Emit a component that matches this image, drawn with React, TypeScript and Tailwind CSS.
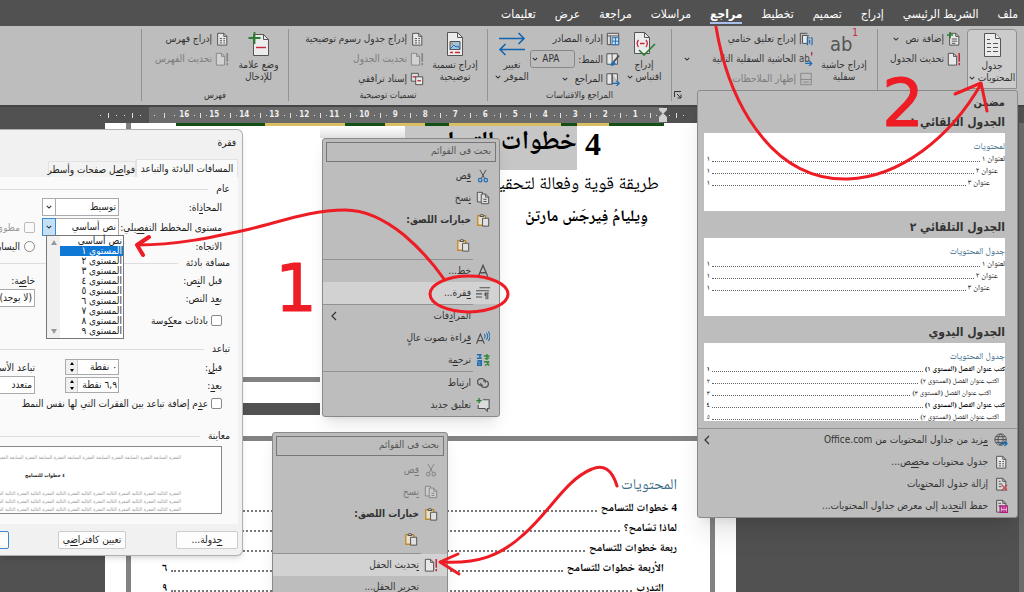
import React from "react";

type IconName =
  | "doc" | "docBang" | "docPlus" | "docX" | "docSave" | "endnote" | "nextNote" | "notes"
  | "sources" | "style" | "biblio" | "crossRef" | "globe" | "cut" | "copy" | "paste"
  | "font" | "paragraph" | "readAloud" | "translate" | "link" | "comment" | "none";

const page = "M3 1.5h7l3.5 3.5v10H3z";

const icons: Record<IconName, React.ReactNode> = {
  doc: (
    <>
      <path d={page} fill="#e8e8e8" />
      <path d="M10 1.5V5h3.5M5.5 7.5h2.5M9.5 7.5h2M5.5 10h2.5M9.5 10h2M5.5 12.5h2.5M9.5 12.5h2" />
    </>
  ),
  docBang: (
    <>
      <path d="M1.5 1.5h6l3.5 3.5v10h-9.5z" fill="#e8e8e8" />
      <path d="M7.5 1.5V5h3.5" />
      <path d="M14 1v10M14 12.5v2.5" stroke="#c8283c" strokeWidth="1.8" />
    </>
  ),
  docPlus: (
    <>
      <path d={page} fill="#e8e8e8" />
      <path d="M10 1.5V5h3.5M5.5 8h6M5.5 10.5h6M5.5 13h4" />
      <path d="M3.5 0v7M0 3.5h7" stroke="#2c7d32" strokeWidth="1.8" />
    </>
  ),
  docX: (
    <>
      <path d={page} fill="#d8d8d8" />
      <path d="M10 1.5V5h3.5M5.5 5h2M5.5 8h4M5.5 11h3" />
      <path d="M9 9l6 6.5M15 9l-6 6.5" stroke="#c84848" strokeWidth="1.5" />
    </>
  ),
  docSave: (
    <>
      <path d={page} fill="#d8d8d8" />
      <path d="M10 1.5V5h3.5M5 5h3M5 8h3" />
      <path d="M7 8h8.5v7.5H7z" fill="#e0b8d4" stroke="#b0207c" strokeWidth="1.6" />
      <path d="M9.5 8v2.5h3.5V8M9.5 15.5v-2h3.5v2" stroke="#b0207c" strokeWidth="1.3" />
    </>
  ),
  endnote: (
    <>
      <path d="M1.5 14V1.5h8M4 12V4h7" />
      <path d="M4 4h6v9H4z" fill="#e8e8e8" />
      <path d="M9.5 6.5v8M15 6.5v8M9 6.5h1.5M9 14.5h1.5M14 6.5h1M14 14.5h1M12.2 9v4.5M12.2 6v1.5" stroke="#1f6db5" strokeWidth="1.3" />
    </>
  ),
  nextNote: (
    <>
      <text x="0" y="11" fontSize="11" direction="ltr" fill="#444" stroke="none">ab</text>
      <path d="M14.5 0v4" stroke="#c8283c" strokeWidth="1.5" />
      <path d="M7 13h7M11.5 10l3 3-3 3" stroke="#1f6db5" strokeWidth="1.5" />
    </>
  ),
  notes: <path d="M2 1.5h12v13H2zM2 8.5h12M4.5 11.5h7" />,
  sources: (
    <>
      <path d="M1.5 1.5h13v13h-13zM1.5 4.5h13M5 4.5v10" fill="#e0e0e0" />
      <path d="M7 6.5h7.5v8H7zM7 10.5h7.5M10.8 6.5v8" fill="#cfe0ee" stroke="#1f6db5" />
    </>
  ),
  style: (
    <>
      <path d="M1 2h6v12H1zM7 2h6v12H7" fill="#e8e8e8" />
      <path d="M15 4l-6 7" strokeWidth="2" />
      <path d="M8.5 10.5c-2 .5-1.500 3-3 4.500 3 .5 5-.5 5-2.500z" fill="#1f6db5" stroke="#1f6db5" />
    </>
  ),
  biblio: (
    <>
      <path d="M1 2h6v12H1zM7 2h6v8M7 2v12" fill="#e8e8e8" />
      <path d="M7 13h8M12 10l3 3-3 3" stroke="#1f6db5" strokeWidth="1.5" />
    </>
  ),
  crossRef: (
    <>
      <path d="M1.5 1.5h8v9h-8z" fill="#e0e0e0" />
      <path d="M3 5.5h4" stroke="#c8283c" strokeWidth="1.5" />
      <path d="M6.5 5.5h8v9h-8z" fill="#e8e8e8" />
      <path d="M8.5 10h4" stroke="#c8283c" strokeWidth="1.5" />
    </>
  ),
  globe: (
    <>
      <circle cx="7.5" cy="7.5" r="6.5" />
      <path d="M1 7.5h13M2 4.2h11M2 10.8h11M7.5 1c-4 3.5-4 9.5 0 13M7.5 1c4 3.5 4 9.5 0 13" />
      <path d="M7 12h8M12 9l3 3-3 3" stroke="#1f6db5" strokeWidth="1.6" />
    </>
  ),
  cut: (
    <>
      <path d="M4.5 1l5.5 10M11.5 1L6 11" />
      <circle cx="4.8" cy="12.8" r="2" stroke="#1f6db5" strokeWidth="1.4" />
      <circle cx="11.2" cy="12.8" r="2" stroke="#1f6db5" strokeWidth="1.4" />
    </>
  ),
  copy: (
    <>
      <path d="M1.5 1.5h6v11h-6z" fill="#dcdcdc" />
      <path d="M6 3.5h5l3.5 3.5v7.5H6z" fill="#dcdcdc" />
      <path d="M11 3.5V7h3.5M8.5 9.5h3.5M8.5 12h3.5" />
    </>
  ),
  paste: (
    <>
      <path d="M2 3h9v11H2z" fill="#e8e0cc" stroke="#c08a28" strokeWidth="1.5" />
      <path d="M4.5 4V2.5h1.2a1 1 0 0 1 2 0h1.3V4z" fill="#ccc" />
      <path d="M7.5 6h7v9h-7z" fill="#e0e0e0" />
    </>
  ),
  font: <path d="M2.5 14.5L8 1.5l5.5 13M4.5 10h7" strokeWidth="1.5" />,
  paragraph: (
    <>
      <path d="M4 2h12M0 5.5h15M0 9h7M0 12.5h7" strokeWidth="1.2" />
      <path d="M10.5 8h4M11.5 8v7M13.5 8v7M11.5 11a1.5 1.5 0 0 1 0-3" strokeWidth="1.2" />
    </>
  ),
  readAloud: (
    <>
      <path d="M.5 14.5L5 3.5l4.5 11M2 11h6" strokeWidth="1.3" />
      <path d="M9.5 3.5c1.2 1.5 1.2 3.5 0 5M11.8 2c2 2.5 2 5.5 0 8M14 .5c2.5 3.5 2.5 7.5 0 11" stroke="#1f6db5" strokeWidth="1.2" />
    </>
  ),
  translate: (
    <>
      <path d="M1 2h5.5M4.5 2v4M1 6h5.5M1.5 9h4.5v5h-4v-2.5H6" stroke="#1f6db5" strokeWidth="1.8" />
      <path d="M9 3.5h6.5M12.5 1v7M10 6.5l5-1M9 10h6M12 9.5l3 5M15 10l-4.5 4.5" stroke="#2c8a3c" strokeWidth="1.6" />
    </>
  ),
  link: (
    <>
      <path d="M8 10.5H5a3.8 3.8 0 0 1 0-7.5h2a3.8 3.8 0 0 1 3.5 5" strokeWidth="1.3" />
      <path d="M8 5.5h3a3.8 3.8 0 0 1 0 7.5H9a3.8 3.8 0 0 1-3.5-5" strokeWidth="1.3" />
    </>
  ),
  comment: (
    <>
      <path d="M8 2h7v10h-2v3l-3-3H2.5V8" fill="#dcdcdc" strokeWidth="1.2" />
      <path d="M3.5 0v6M.5 3h6" stroke="#2c7d32" strokeWidth="1.5" />
    </>
  ),
  none: null,
};

const Icon = ({ name, muted }: { name: IconName; muted?: boolean }) => (
  <svg
    viewBox="0 0 16 16"
    className={`h-[14px] w-[14px] shrink-0 ${muted ? "opacity-50 grayscale" : ""}`}
    fill="none"
    stroke="#505050"
    strokeWidth="1.1"
  >
    {icons[name]}
  </svg>
);

const Chevron = ({ className = "" }: { className?: string }) => (
  <svg viewBox="0 0 8 8" className={`h-[6px] w-[6px] shrink-0 ${className}`} fill="none" stroke="#333" strokeWidth="1.4">
    <path d="M1 2.5l3 3 3-3" />
  </svg>
);

const SubmenuArrow = () => (
  <svg viewBox="0 0 6 10" className="mr-auto h-[10px] w-[6px] shrink-0" fill="none" stroke="#333" strokeWidth="1.2">
    <path d="M5 1L1 5l4 4" />
  </svg>
);

// "_" marks the access key: the letter after it is underlined
const Label = ({ text }: { text: string }) => {
  const i = text.indexOf("_");
  if (i < 0) return <>{text}</>;
  return (
    <>
      {text.slice(0, i)}
      <u className="underline-offset-2">{text[i + 1]}</u>
      {text.slice(i + 2)}
    </>
  );
};

/* ---------- Ribbon ---------- */

const tabs = ["ملف", "الشريط الرئيسي", "إدراج", "تصميم", "تخطيط", "مراجع", "مراسلات", "مراجعة", "عرض", "تعليمات"];

const TabBar = () => (
  <nav className="flex h-[26px] items-center gap-[19px] bg-[#515151] px-[6px] pt-[3px] text-[12px] text-white">
    {tabs.map((tab) => (
      <button
        key={tab}
        className={`h-[18px] border-b-2 leading-4 whitespace-nowrap ${tab === "مراجع" ? "border-[#a9c0ee] font-bold" : "border-transparent"}`}
      >
        {tab}
      </button>
    ))}
  </nav>
);

const Group = ({ label, width, launcher, children }: { label: string; width: string; launcher?: boolean; children: React.ReactNode }) => (
  <section className={`${width} flex shrink-0 flex-col border-l border-[#929292]`}>
    <div className="flex h-[60px] items-start">{children}</div>
    <div className="flex h-3 items-center justify-center text-[9px] leading-3">
      <span className="flex-1 text-center">{label}</span>
      {launcher && (
        <svg viewBox="0 0 8 8" className="ml-[2px] h-2 w-2" fill="none" stroke="#333">
          <path d="M.5 6V.5H7M3 3l4 4M7 3.5V7H3.5" />
        </svg>
      )}
    </div>
  </section>
);

const BigButton = ({ icon, lines, drop, className = "" }: { icon: React.ReactNode; lines: string[]; drop?: boolean; className?: string }) => (
  <button className={`flex shrink-0 flex-col items-center whitespace-nowrap pt-[3px] text-[10px] leading-3 ${className}`}>
    <span className="mb-[3px] flex h-6 items-center">{icon}</span>
    <span>{lines[0]}</span>
    <span className="flex items-center gap-[3px]">
      {lines[1]}
      {drop && <Chevron />}
    </span>
  </button>
);

const Command = ({ icon, text, drop, muted }: { icon: IconName; text: string; drop?: boolean; muted?: boolean }) => (
  <button className={`flex h-5 items-center gap-[3px] whitespace-nowrap text-[10px] leading-5 ${muted ? "text-[#7c7c7c]" : ""}`}>
    <Icon name={icon} muted={muted} />
    {text}
    {drop && <Chevron className="mr-1" />}
  </button>
);

const big = "h-6 w-7";

const Ribbon = () => (
  <div className="flex h-[79px] bg-[#bdbdbd] pt-[3px] pb-1 text-[#333]">
    <Group label="" width="w-[147px]">
      <BigButton
        className="mr-[7px] w-[50px] rounded-t border border-[#8f8f8f] bg-[#cbcbcb] pb-1"
        lines={["جدول", "المحتويات"]}
        drop
        icon={
          <svg viewBox="0 0 28 24" className={big} fill="#ececec" stroke="#555">
            <path d="M6.5.5h11l5 5v18h-16z" />
            <path d="M17.5.5v5h5M9 6.5h3M9 10.5h4M9 14.5h4M9 18.5h4M15 10.5h5M15 14.5h5M15 18.5h5" />
          </svg>
        }
      />
      <div className="mr-[6px] flex flex-col">
        <Command icon="docPlus" text="إضافة نص" drop />
        <Command icon="docBang" text="تحديث الجدول" />
      </div>
    </Group>

    <Group label="" width="w-[206px]" launcher>
      <BigButton
        className="mr-2 w-[50px]"
        lines={["إدراج حاشية", "سفلية"]}
        icon={
          <span dir="ltr" className="flex items-start text-[20px] leading-6 text-[#555]">
            ab<sup className="text-[10px] leading-3 text-[#c8283c]">1</sup>
          </span>
        }
      />
      <div className="mr-[6px] flex flex-1 flex-col">
        <Command icon="endnote" text="إدراج تعليق ختامي" />
        <div className="flex items-center justify-between">
          <Command icon="nextNote" text="الحاشية السفلية التالية" />
          <Chevron className="ml-3" />
        </div>
        <Command icon="notes" text="إظهار الملاحظات" muted />
      </div>
    </Group>

    <Group label="المراجع والاقتباسات" width="w-[184px]">
      <BigButton
        className="mr-[9px] w-9"
        lines={["إدراج", "اقتباس"]}
        drop
        icon={
          <svg viewBox="0 0 28 24" className={big} fill="none" stroke="#555">
            <path d="M4.5.5h10l5 5v16h-15z" fill="#ececec" />
            <path d="M14.5.5v5h5" />
            <path d="M8.5 8c-1.5 2-1.5 5 0 7M16 8c1.5 2 1.5 5 0 7M10 11.5h4.5" stroke="#c8283c" strokeWidth="1.3" />
            <path d="M9 18l5 5L25 12" stroke="#2c7d32" strokeWidth="1.6" />
          </svg>
        }
      />
      <div className="mr-[6px] flex w-[89px] flex-col">
        <Command icon="sources" text="إدارة المصادر" />
        <div className="flex h-5 items-center gap-[3px] text-[10px]">
          <Icon name="style" />
          <label htmlFor="cite-style">النمط:</label>
          <div dir="ltr" className="relative mr-auto">
            <select id="cite-style" className="h-[18px] w-[45px] appearance-none rounded-[3px] border border-[#888] pl-[11px] text-[10px] leading-4">
              <option>APA</option>
            </select>
            <Chevron className="pointer-events-none absolute left-[2px] top-[6px]" />
          </div>
        </div>
        <Command icon="biblio" text="المراجع" drop />
      </div>
      <BigButton
        className="mr-[3px] w-8"
        lines={["تغيير", "الموفر"]}
        drop
        icon={
          <svg viewBox="0 0 28 24" className={big} fill="none" stroke="#1266b0" strokeWidth="1.6">
            <path d="M1 6.5h25M20.5 1l5.5 5.5-5.5 5.5M27 17.5H2M7.5 12L2 17.5 7.5 23" />
          </svg>
        }
      />
    </Group>

    <Group label="تسميات توضيحية" width="w-[199px]">
      <BigButton
        className="mr-[7px] w-[50px]"
        lines={["إدراج تسمية", "توضيحية"]}
        icon={
          <svg viewBox="0 0 28 24" className={big} fill="none" stroke="#555">
            <path d="M6.5.5h10l5 5v18h-15z" fill="#ececec" />
            <path d="M16.5.5v5h5" />
            <path d="M9 9.5h10v8H9z" fill="#9fc3e0" />
            <path d="M9 17l4-4 2 2 2-1 2 3" stroke="#1f6db5" />
            <path d="M10 11.5h2" stroke="#e0902c" strokeWidth="2" />
            <path d="M9 20.5h3M14 20.5h5" stroke="#c8283c" strokeWidth="1.4" />
          </svg>
        }
      />
      <div className="mr-[6px] flex flex-col">
        <Command icon="doc" text="إدراج جدول رسوم توضيحية" />
        <Command icon="docBang" text="تحديث الجدول" muted />
        <Command icon="crossRef" text="إسناد ترافقي" />
      </div>
    </Group>

    <Group label="فهرس" width="w-[147px]">
      <BigButton
        className="mr-2 w-[43px]"
        lines={["وضع علامة", "للإدخال"]}
        icon={
          <svg viewBox="0 0 28 24" className={big} fill="none" stroke="#555">
            <path d="M8.5 2.5h10l5 5v16h-15z" fill="#ececec" />
            <path d="M18.5 2.5v5h5" />
            <path d="M11 15.5h10" stroke="#c8283c" strokeWidth="1.4" />
            <path d="M9.5 0v12M3.5 6h12" stroke="#2c7d32" strokeWidth="1.8" />
          </svg>
        }
      />
      <div className="mr-2 flex flex-col">
        <Command icon="doc" text="إدراج فهرس" />
        <Command icon="docBang" text="تحديث الفهرس" muted />
      </div>
    </Group>
  </div>
);

const Ticks = () => (
  <>
    <i className="h-px w-px bg-[#ddd]" />
    <i className="h-[5px] w-px bg-[#ddd]" />
    <i className="h-px w-px bg-[#ddd]" />
  </>
);

const Ruler = () => (
  <div className="flex h-[18px] border-t-2 border-[#454545] bg-[#515151] text-[8px] font-bold text-[#eee]">
    <div className="flex w-[361px] items-center justify-end gap-[6px] pl-[6px]">
      <Ticks />
    </div>
    <div className="flex h-4 w-[514px] items-center bg-[#6b6b6b]">
      <svg viewBox="0 0 8 14" className="-mr-1 h-[14px] w-2 shrink-0" fill="#d0d0d0">
        <path d="M0 0h8v2L4 6 0 2zM4 5l4 4v5H0V9z" />
      </svg>
      {Array.from({ length: 16 }, (_, n) => (
        <div key={n} className="flex w-[30px] shrink-0 items-center justify-around">
          <Ticks />
          <span className="w-2 text-center leading-4">{n + 1}</span>
        </div>
      ))}
      <div className="flex flex-1 items-center justify-around">
        <Ticks />
      </div>
    </div>
    <div className="flex items-center gap-[7px] pr-2">
      <Ticks />
      <Ticks />
    </div>
  </div>
);

/* ---------- Document ---------- */

const toc = [
  { text: "4 خطوات للتسامح", pageNo: "٤", indent: false },
  { text: "لماذا تسّامح؟", pageNo: "٥", indent: false },
  { text: "ربعة خطوات للتسامح", pageNo: "٦", indent: false },
  { text: "الأربعة خطوات للتسامح", pageNo: "٦", indent: true },
  { text: "التدرب", pageNo: "٩", indent: true },
];

const Workspace = () => (
  <main className="flex flex-1 overflow-hidden bg-[#515151]">
    <div className="w-[5px] bg-[#6b6b6b]" />
    <div className="w-[283px]" />
    <div className="flex w-[631px] flex-col gap-3">
      <article className="h-[280px] shrink-0 bg-white px-[21px] pb-[21px]">
        <div className="h-full border-x-[5px] border-b-[5px] border-[#828282]">
          <div className="mr-[46px] ml-[45px] flex h-[3px] bg-[#154f18]">
            <div className="mr-[55px] w-8 bg-[#dcbe62]" />
            <div className="mr-4 w-28 bg-[#dcbe62]" />
            <div className="mr-6 w-10 bg-[#dcbe62]" />
            <div className="mr-10 w-[80px] bg-[#dcbe62]" />
          </div>
        </div>
      </article>
      <article className="h-[280px] shrink-0 bg-white px-[21px] pt-[21px]">
        <div className="h-full border-x-[5px] border-t-[5px] border-[#828282] pt-[31px] pr-[33px] pl-[31px] font-['Liberation_Serif','Noto_Naskh_Arabic','DejaVu_Sans',serif] text-black">
          <h2 className="h-[25px] text-[15px] leading-[25px] text-[#3b6a85]">المحتويات</h2>
          <ul>
            {toc.map((row) => (
              <li key={row.text} className={`flex h-[20px] items-center gap-1 text-[11px] leading-[20px] font-bold ${row.indent ? "pr-[13px]" : ""}`}>
                <a href="#toc">{row.text}</a>
                <span className="mt-2 flex-1 border-b-2 border-dotted border-[#777]" />
                <span>{row.pageNo}</span>
              </li>
            ))}
          </ul>
        </div>
      </article>
    </div>
  </main>
);

/* ---------- Context menus ---------- */

type Entry = { icon?: IconName; text?: string; muted?: boolean; heading?: boolean; active?: boolean; sub?: boolean; rule?: boolean; big?: boolean };

const textMenu: Entry[] = [
  { icon: "cut", text: "_قص" },
  { icon: "copy", text: "_نسخ" },
  { icon: "paste", text: "خيارات اللصق:", heading: true },
  { big: true },
  { rule: true },
  { icon: "font", text: "خ_ط..." },
  { icon: "paragraph", text: "_فقرة...", active: true },
  { rule: true },
  { icon: "none", text: "المرا_دفات", sub: true },
  { icon: "readAloud", text: "_قراءة بصوت عالٍ" },
  { icon: "translate", text: "ترج_مة" },
  { rule: true },
  { icon: "link", text: "ار_تباط" },
  { icon: "comment", text: "تعليق جديد" },
];

const fieldMenu: Entry[] = [
  { icon: "cut", text: "_قص", muted: true },
  { icon: "copy", text: "_نسخ", muted: true },
  { icon: "paste", text: "خيارات اللصق:", heading: true },
  { big: true },
  { rule: true },
  { icon: "docBang", text: "_تحديث الحقل", active: true },
  { icon: "none", text: "_تحرير الحقل..." },
];

const ContextMenu = ({ entries, className }: { entries: Entry[]; className: string }) => (
  <div className={`absolute rounded-[3px] border border-[#8a8a8a] bg-[#bdbdbd] text-[10px] text-[#333] shadow-lg ${className}`}>
    <div className="p-[3px]">
      <input
        aria-label="بحث في القوائم"
        placeholder="بحث في القوائم"
        className="block h-5 w-full border border-[#777] px-1 pb-1 text-[10px] leading-4 placeholder:text-[#555]"
      />
    </div>
    {entries.map((e, i) => {
      if (e.rule) return <hr key={i} className="mr-[26px] border-[#929292]" />;
      if (e.big)
        return (
          <div key={i} className="flex h-7 items-center pr-[29px]">
            <button aria-label="لصق">
              <Icon name="paste" />
            </button>
          </div>
        );
      return (
        <button
          key={i}
          className={`flex h-[22px] w-full items-center gap-[5px] pr-[9px] pl-2 leading-[22px] ${e.active ? "bg-[#d2d2d2]" : ""} ${e.muted ? "text-[#777]" : ""} ${e.heading ? "font-bold" : ""}`}
        >
          <Icon name={e.icon!} muted={e.muted} />
          <span>
            <Label text={e.text!} />
          </span>
          {e.sub && <SubmenuArrow />}
        </button>
      );
    })}
  </div>
);

const TextSnippet = () => (
  <div className="absolute top-[126px] left-[320px] h-[309px] w-[377px] bg-white font-['Liberation_Serif','Noto_Naskh_Arabic','DejaVu_Sans',serif] text-black">
    <h1 className="flex h-11 pr-[96px] text-[32px] leading-9 font-bold">
      4
      <span className="mr-2 h-11 w-[172px] shrink-0 bg-[#c6c6c6] text-[26px] whitespace-nowrap leading-[30px]">خطوات للتسامح</span>
      <span className="h-3 flex-1 bg-linear-to-t from-[#e0e0e0] to-white" />
    </h1>
    <p className="h-7 pr-[38px] text-[18px] leading-[26px]">طريقة قوية وفعالة لتحقيق</p>
    <p className="mt-1 h-7 pr-[49px] text-[16px] leading-7 font-bold">وِيليامُ فِيرجَسْ مارتنْ</p>
  </div>
);

/* ---------- Table of contents gallery ---------- */

const autoRows = [
  { text: "لعنوان ١", n: "١", style: "text-[8px]" },
  { text: "عنوان ٢", n: "١", style: "text-[8px] pr-[7px]" },
  { text: "عنوان ٣", n: "١", style: "text-[8px] pr-[15px]" },
];

const manualRows = [
  { text: "كتب عنوان الفصل (المستوى ١)", n: "١", style: "text-[7px] font-bold" },
  { text: "اكتب عنوان الفصل (المستوى ٢)", n: "٢", style: "text-[7px] pr-[6px]" },
  { text: "اكتب عنوان الفصل (المستوى ٣)", n: "٣", style: "text-[7px] pr-[14px]" },
  { text: "كتب عنوان الفصل (المستوى ١)", n: "٤", style: "text-[7px] font-bold" },
  { text: "اكتب عنوان الفصل (المستوى ٢)", n: "٥", style: "text-[7px] pr-[6px]" },
];

const galleries = [
  { name: "الجدول التلقائي ١", title: "لمحتويات", rows: autoRows },
  { name: "الجدول التلقائي ٢", title: "جدول المحتويات", rows: autoRows },
  { name: "الجدول اليدوي", title: "جدول المحتويات", rows: manualRows },
];

const galleryActions: { icon: IconName; text: string; sub?: boolean }[] = [
  { icon: "globe", text: "_مزيد من جداول المحتويات من Office.com", sub: true },
  { icon: "doc", text: "جدول محتويات مخ_صص..." },
  { icon: "docX", text: "إزالة جدول المحت_ويات" },
  { icon: "docSave", text: "حفظ الت_حديد إلى معرض جداول المحتويات..." },
];

const TocGallery = () => (
  <div className="absolute top-[90px] left-[697px] w-[321px] rounded-[3px] border border-[#8a8a8a] bg-[#bdbdbd] text-[#333] shadow-xl">
    <p className="h-5 pr-3 text-[11px] leading-6 font-bold">مضمن</p>
    {galleries.map((g) => (
      <section key={g.name} className="pr-3 pl-[6px]">
        <h3 className="h-[22px] text-[12px] leading-[22px] font-bold">{g.name}</h3>
        <button className="mb-[5px] flex h-[78px] w-full flex-col justify-start overflow-hidden bg-white pt-[6px] text-right font-['Liberation_Serif','Noto_Naskh_Arabic','DejaVu_Sans',serif]">
          <span className="h-[14px] shrink-0 text-[9px] leading-[14px] text-[#2f6182]">{g.title}</span>
          {g.rows.map((r, i) => (
            <span key={i} className={`flex h-3 w-full shrink-0 items-center gap-[2px] leading-3 text-black ${r.style}`}>
              {r.text}
              <span className="mt-1 flex-1 border-b border-dotted border-[#666]" />
              <span className="w-[6px] pl-1">{r.n}</span>
            </span>
          ))}
        </button>
      </section>
    ))}
    <hr className="mt-[7px] border-[#929292]" />
    {galleryActions.map((a) => (
      <button key={a.icon} className="flex h-[22px] w-full items-center gap-[6px] pr-[9px] pl-[6px] text-[10px] leading-[22px]">
        <Icon name={a.icon} />
        <span>
          <Label text={a.text} />
        </span>
        {a.sub && <SubmenuArrow />}
      </button>
    ))}
  </div>
);

/* ---------- Paragraph dialog ---------- */

const levels = ["نص أساسي", "المستوى ١", "المستوى ٢", "المستوى ٣", "المستوى ٤", "المستوى ٥", "المستوى ٦", "المستوى ٧", "المستوى ٨", "المستوى ٩"];

const Legend = ({ text }: { text: string }) => (
  <div className="flex h-4 items-center gap-2 pr-2 leading-4">
    {text}
    <span className="flex-1 border-t border-[#ddd]" />
  </div>
);

const DialogSelect = ({ id, value, open }: { id: string; value: string; open?: boolean }) => (
  <div className="relative w-[77px]">
    <select id={id} className="block h-[18px] w-full appearance-none border border-[#aaa] bg-white pr-[2px] text-[10px] leading-4">
      <option>{value}</option>
    </select>
    <span className={`pointer-events-none absolute top-0 left-0 flex h-[18px] w-[14px] items-center justify-center border ${open ? "border-[#3b8ad0] bg-[#c4e0f7]" : "border-[#aaa]"}`}>
      <Chevron />
    </span>
  </div>
);

const Spinner = ({ id, value }: { id: string; value: string }) => (
  <div className="flex h-4 w-[54px] border border-[#aaa] bg-white">
    <input id={id} defaultValue={value} className="w-0 flex-1 px-px text-[10px] leading-3" />
    <div className="flex w-3 flex-col border-r border-[#ccc] bg-[#f0f0f0]">
      <button aria-label="زيادة" className="flex flex-1 items-center justify-center">
        <svg viewBox="0 0 4 3" className="h-[3px] w-1"><path d="M0 3l2-3 2 3z" /></svg>
      </button>
      <button aria-label="إنقاص" className="flex flex-1 items-center justify-center">
        <svg viewBox="0 0 4 3" className="h-[3px] w-1"><path d="M0 0l2 3 2-3z" /></svg>
      </button>
    </div>
  </div>
);

// each row: label column, field column, then whatever is cut by the window edge
const Row = ({ id, label, height, field, side }: { id?: string; label: string; height: string; field?: React.ReactNode; side?: React.ReactNode }) => (
  <div className={`flex items-center pr-4 ${height}`}>
    <label htmlFor={id} className="w-[103px] shrink-0 whitespace-nowrap">
      <Label text={label} />
    </label>
    <div className="w-[84px] shrink-0">{field}</div>
    <div className="flex w-24 shrink-0 items-center gap-1 whitespace-nowrap">{side}</div>
  </div>
);

const box = "h-[11px] w-[11px] shrink-0 appearance-none border border-[#888] bg-white";

const ParagraphDialog = () => (
  <div role="dialog" aria-label="فقرة" className="absolute top-[129px] left-0 w-[243px] overflow-hidden rounded-tr-md rounded-br-md border border-l-0 border-[#b0b0b0] bg-[#f1f1f1] pr-1 text-[10px] text-[#222] shadow-md">
    <h2 className="h-[29px] pr-[2px] leading-[26px]">فقرة</h2>
    <div className="flex h-[18px] items-end leading-4">
      <button className="h-[18px] w-[102px] shrink-0 border border-b-0 border-[#e2e2e2] bg-[#fafafa] whitespace-nowrap">المسافات البادئة والتباعد</button>
      <button className="h-4 w-[88px] shrink-0 border border-b-0 border-[#e2e2e2] bg-[#f3f3f3] whitespace-nowrap"><Label text="فوا_صل صفحات وأسطر" /></button>
    </div>
    <div className="h-[347px] bg-[#fafafa] pt-1">
      <Legend text="عام" />
      <Row id="align" label="المحا_ذاة:" height="h-5" field={<DialogSelect id="align" value="توسيط" />} />
      <Row
        id="level"
        label="مستوى المخطط التف_صيلي:"
        height="h-5"
        field={<DialogSelect id="level" value="نص أساسي" open />}
        side={
          <label className="flex items-center gap-1 text-[#999]">
            <input type="checkbox" disabled className="h-[11px] w-[11px] shrink-0 appearance-none rounded-[2px] border border-[#bbb]" />
            مطوي افتراضيًا
          </label>
        }
      />
      <Row
        label="الاتجاه:"
        height="h-[18px]"
        side={
          <label className="flex items-center gap-1">
            <input type="radio" name="dir" className={`${box} rounded-full`} />
            اليسار إلى اليمين
          </label>
        }
      />
      <Legend text="مسافة بادئة" />
      <Row label="قبل ال_نص:" height="h-[18px]" side={<label htmlFor="special"><Label text="خا_صة:" /></label>} />
      <Row label="ب_عد النص:" height="h-[18px]" side={<DialogSelect id="special" value="(لا يوجد)" />} />
      <label className="flex h-[26px] items-center gap-[3px] pr-4">
        <input type="checkbox" className={`${box} rounded-[2px]`} />
        <span><Label text="بادئات مع_كوسة" /></span>
      </label>
      <div className="h-2" />
      <Legend text="تباعد" />
      <div className="h-px" />
      <Row id="before" label="قب_ل:" height="h-[18px]" field={<Spinner id="before" value="٠ نقطة" />} side={<label htmlFor="spacing">تباعد الأسطر:</label>} />
      <Row id="after" label="بع_د:" height="h-[18px]" field={<Spinner id="after" value="٦,٩ نقطة" />} side={<DialogSelect id="spacing" value="متعدد" />} />
      <label className="flex h-[18px] items-center gap-[3px] pr-4 whitespace-nowrap">
        <input type="checkbox" className={`${box} rounded-[2px]`} />
        <span><Label text="ع_دم إضافة تباعد بين الفقرات التي لها نفس النمط" /></span>
      </label>
      <div className="h-4" />
      <Legend text="معاينة" />
      <div className="mt-[2px] mr-4 h-[68px] overflow-hidden border border-l-0 border-[#888] bg-white pt-[6px] pr-10 text-[5px] leading-2 whitespace-nowrap text-[#999]">
        <p>{"الفقرة السابقة ".repeat(9)}</p>
        <p className="my-[6px] pr-[116px] font-bold text-[#222] leading-4">٤ خطوات للتسامح</p>
        <p>{"الفقرة التالية ".repeat(9)}</p>
        <p>{"الفقرة التالية ".repeat(9)}</p>
        <p>{"الفقرة التالية ".repeat(9)}</p>
        <p>{"الفقرة التالية ".repeat(9)}</p>
      </div>
    </div>
    <div className="flex h-[31px] items-center">
      <button className="h-[18px] w-[62px] shrink-0 rounded-[2px] border border-[#ccc] bg-[#fdfdfd] leading-4"><Label text="_جدولة..." /></button>
      <button className="mr-[50px] h-[18px] w-[68px] shrink-0 rounded-[2px] border border-[#ccc] bg-[#fdfdfd] leading-4 whitespace-nowrap"><Label text="تعيين كافترا_ضي" /></button>
      <button aria-label="موافق" className="mr-[49px] h-[18px] w-[68px] shrink-0 rounded-[2px] border border-[#3b8ad0] bg-[#fdfdfd]" />
    </div>

    <ul role="listbox" className="absolute top-[105px] left-[46px] h-[104px] w-[78px] border border-[#777] bg-white pl-[13px] text-[10px] leading-[10px]">
      {levels.map((level, i) => (
        <li key={level} role="option" aria-selected={i === 1} className={`h-[10px] pr-[1px] ${i === 1 ? "bg-[#0f78d4] text-white" : ""}`}>
          {level}
        </li>
      ))}
      <li aria-hidden className="absolute inset-y-0 left-0 flex w-[13px] flex-col items-center justify-between bg-[#f0f0f0] py-1">
        <svg viewBox="0 0 6 5" className="h-[5px] w-[6px]" fill="#999"><path d="M0 5l3-5 3 5z" /></svg>
        <svg viewBox="0 0 6 5" className="h-[5px] w-[6px]" fill="#999"><path d="M0 0l3 5 3-5z" /></svg>
      </li>
    </ul>
  </div>
);

/* ---------- Red tutorial marks ---------- */

const Marks = () => (
  <svg className="pointer-events-none absolute inset-0 h-full w-full" fill="none" stroke="#ee1c24" strokeWidth="3" strokeLinecap="round" strokeLinejoin="round">
    <path d="M716 27C722 62 732 92 749 119C775 160 808 180 848 179C900 177 950 138 981 84" />
    <path d="M955 94L981 83L987 111" />
    <path d="M444 279C430 259 418 247 404 235C383 218 362 210 345 210C310 210 280 222 250 229C210 238 175 245 138 245" />
    <path d="M149 237L137 245L143 255" strokeWidth="4" />
    <ellipse cx="469" cy="294" rx="39" ry="18" />
    <path d="M617 486C612 469 603 464 592 469C565 480 550 512 523 535C500 556 478 564 441 562" />
    <path d="M458 554L440 562L459 574" />
    <g fill="#ee1c24" strokeWidth="1" className="font-['DejaVu_Sans',sans-serif] text-[66px]" direction="ltr">
      <text x="275" y="311">1</text>
      <text x="882" y="126">2</text>
    </g>
  </svg>
);

export default function App() {
  return (
    <div dir="rtl" className="relative flex h-screen flex-col overflow-hidden bg-[#515151] font-['DejaVu_Sans_Condensed','DejaVu_Sans','Noto_Sans',sans-serif]">
      <TabBar />
      <Ribbon />
      <Ruler />
      <Workspace />
      <TextSnippet />
      <ContextMenu entries={textMenu} className="top-[138px] left-[322px] w-[178px]" />
      <ContextMenu entries={fieldMenu} className="top-[432px] left-[272px] w-[176px]" />
      <ParagraphDialog />
      <TocGallery />
      <Marks />
    </div>
  );
}
